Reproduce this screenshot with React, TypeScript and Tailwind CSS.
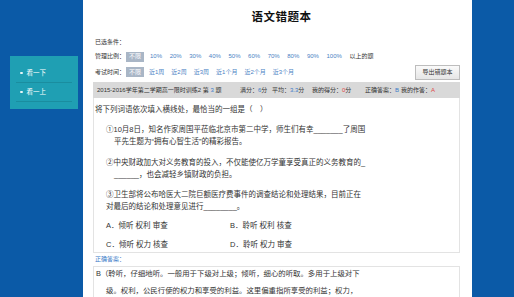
import React from 'react';

const percents = ['10%', '20%', '30%', '40%', '50%', '60%', '70%', '80%', '90%', '100%'];
const times = ['近1周', '近2周', '近3周', '近1个月', '近2个月', '近3个月'];

const App: React.FC = () => {
  return (
    <div className="w-[514px] h-[297px] flex overflow-hidden bg-[#0b5aa7] [font-family:'Liberation_Sans','Noto_Sans_CJK_SC',sans-serif] text-[#333] whitespace-nowrap">
      {/* left nav */}
      <div className="w-[83px] shrink-0 pl-[10px] pr-[5px] pt-[56px]">
        <div className="bg-[#1f9fb3] px-[6px] pt-[8px] pb-[7px] text-white text-[6.5px]">
          <div className="h-[19px] flex items-center gap-[4px] pl-[4px] border-b border-[#1a8d9f]">
            <span className="w-[2.5px] h-[2.5px] rounded-full bg-white/90" />
            <span>看一下</span>
          </div>
          <div className="h-[19px] flex items-center gap-[4px] pl-[4px] border-b border-[#1a8d9f]">
            <span className="w-[2.5px] h-[2.5px] rounded-full bg-white/90" />
            <span>看一上</span>
          </div>
        </div>
      </div>

      {/* main panel */}
      <div className="w-[389px] shrink-0 h-full bg-white pl-[10px] pr-[12px] flex flex-col">
        <div className="h-[36px] flex items-center justify-center pl-[10px]">
          <h1 className="text-[11.5px] font-bold text-[#111] tracking-[0.5px]">语文错题本</h1>
        </div>

        <div className="h-[13px] flex items-center pl-[2px] text-[6px]">已选条件：</div>

        <div className="h-[16px] flex items-center pl-[2px] text-[6px]">
          <span className="w-[31px] shrink-0">管理比例：</span>
          <span className="h-[10px] px-[3px] flex items-center bg-[#a9b6c6] text-white">不限</span>
          <div className="flex items-center gap-[7.6px] ml-[6px] text-[#4a82c4]">
            {percents.map((p) => (
              <span key={p}>{p}</span>
            ))}
            <span className="text-[#333]">以上的题</span>
          </div>
        </div>

        <div className="h-[16px] flex items-center pl-[2px] text-[6px]">
          <span className="w-[31px] shrink-0">考试时间：</span>
          <span className="h-[10px] px-[3px] flex items-center bg-[#a9b6c6] text-white">不限</span>
          <div className="flex items-center gap-[7px] ml-[5px] text-[#4a82c4]">
            {times.map((t) => (
              <span key={t}>{t}</span>
            ))}
          </div>
          <button className="ml-auto h-[15px] w-[45px] border border-[#bdbdbd] bg-gradient-to-b from-[#fafafa] to-[#e6e6e6] text-[6px] text-[#333]">
            导出错题本
          </button>
        </div>

        {/* header bar */}
        <div className="mt-[2px] h-[16px] bg-[#d9d9d9] flex items-center pl-[4px] text-[6px] text-[#333]">
          <span className="w-[143px] shrink-0">
            2015-2016学年第二学期高一限时训练2 第 <span className="text-[#3b7bc8]">3</span> 题
          </span>
          <span className="w-[32px] shrink-0">
            满分：<span className="text-[#3b7bc8]">6</span>分
          </span>
          <span className="w-[40px] shrink-0">
            平均：<span className="text-[#3b7bc8]">3.3</span>分
          </span>
          <span className="w-[53px] shrink-0">
            我的得分：<span className="text-[#e04848]">0</span>分
          </span>
          <span className="w-[36px] shrink-0">
            正确答案：<span className="text-[#3b7bc8]">B</span>
          </span>
          <span>
            我的作答：<span className="text-[#e04848]">A</span>
          </span>
        </div>

        {/* question box */}
        <div className="h-[156px] border border-t-0 border-[#e3e3e3] text-[7.5px] leading-[12px] text-[#333]">
          <p className="mt-[6px] pl-[1px]">将下列词语依次填入横线处，最恰当的一组是（　）</p>
          <div className="mt-[8px] pl-[12px]">
            <p>①10月8日，知名作家周国平莅临北京市第二中学，师生们有幸_______了周国</p>
            <p className="pl-[8px]">平先生题为“拥有心智生活”的精彩报告。</p>
          </div>
          <div className="mt-[9px] pl-[12px]">
            <p>②中央财政加大对义务教育的投入，不仅能使亿万学童享受真正的义务教育的_</p>
            <p className="pl-[8px]">______，也会减轻乡镇财政的负担。</p>
          </div>
          <div className="mt-[8px] pl-[12px]">
            <p>③卫生部将公布哈医大二院巨额医疗费事件的调查结论和处理结果，目前正在</p>
            <p>对最后的结论和处理意见进行________。</p>
          </div>
          <div className="mt-[7px] pl-[12px] flex">
            <span className="w-[124px]">A．倾听 权利 审查</span>
            <span>B．聆听 权利 核查</span>
          </div>
          <div className="mt-[7px] pl-[12px] flex">
            <span className="w-[124px]">C．倾听 权力 核查</span>
            <span>D．聆听 权力 审查</span>
          </div>
        </div>

        <div className="h-[13px] flex items-center pl-[2px] text-[6px] text-[#3b7bc8]">正确答案：</div>

        {/* answer box */}
        <div className="flex-1 border border-b-0 border-[#e3e3e3] text-[7.4px] leading-[12px] text-[#333] pl-[2px]">
          <p className="pt-[1px]">B（聆听，仔细地听。一般用于下级对上级；倾听，细心的听取。多用于上级对下</p>
          <p className="mt-[5px] pl-[10px]">级。权利，公民行使的权力和享受的利益。这里偏重指所享受的利益；权力，</p>
        </div>
      </div>

      <div className="flex-1" />
    </div>
  );
};

export default App;
